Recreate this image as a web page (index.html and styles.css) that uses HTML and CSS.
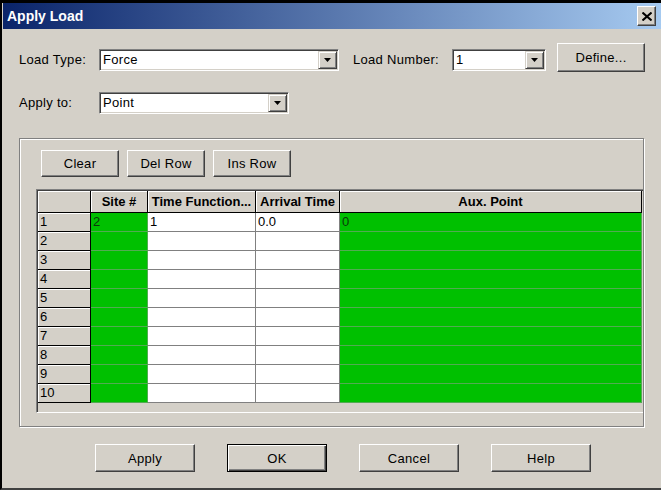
FILE: index.html
```html
<!DOCTYPE html>
<html lang="en">
<head>
  <meta charset="UTF-8" />
  <title>Apply Load</title>
  <link rel="stylesheet" href="styles.css">
</head>
<body>
  <div class="window">
    <div class="titlebar">
      <span class="title">Apply Load</span>
      <button class="close">
        <svg width="10" height="9" viewBox="0 0 10 9"><path d="M0.5 0.5 L9.5 8.5 M9.5 0.5 L0.5 8.5" stroke="#000" stroke-width="2" fill="none"/></svg>
      </button>
    </div>

    <div class="content">
      <div class="row">
        <span class="lbl lbl-type">Load Type:</span>
        <div class="combo combo-type">
          <span class="combo-text">Force</span>
          <span class="drop"><svg width="7" height="4" viewBox="0 0 7 4"><polygon points="0,0 7,0 3.5,4" fill="#000"/></svg></span>
        </div>
        <span class="lbl lbl-num">Load Number:</span>
        <div class="combo combo-num">
          <span class="combo-text">1</span>
          <span class="drop"><svg width="7" height="4" viewBox="0 0 7 4"><polygon points="0,0 7,0 3.5,4" fill="#000"/></svg></span>
        </div>
        <button class="btn btn-define">Define...</button>
      </div>

      <div class="row row-apply">
        <span class="lbl lbl-type">Apply to:</span>
        <div class="combo combo-point">
          <span class="combo-text">Point</span>
          <span class="drop"><svg width="7" height="4" viewBox="0 0 7 4"><polygon points="0,0 7,0 3.5,4" fill="#000"/></svg></span>
        </div>
      </div>

      <div class="group">
        <div class="tools">
          <button class="btn btn-tool">Clear</button>
          <button class="btn btn-tool">Del Row</button>
          <button class="btn btn-tool">Ins Row</button>
        </div>

        <div class="grid-wrap">
          <div class="grid">
            <div class="hd"></div>
            <div class="hd">Site #</div>
            <div class="hd">Time Function...</div>
            <div class="hd">Arrival Time</div>
            <div class="hd">Aux. Point</div>

            <div class="rh">1</div><div class="cell green">2</div><div class="cell">1</div><div class="cell">0.0</div><div class="cell green">0</div>
            <div class="rh">2</div><div class="cell green"></div><div class="cell"></div><div class="cell"></div><div class="cell green"></div>
            <div class="rh">3</div><div class="cell green"></div><div class="cell"></div><div class="cell"></div><div class="cell green"></div>
            <div class="rh">4</div><div class="cell green"></div><div class="cell"></div><div class="cell"></div><div class="cell green"></div>
            <div class="rh">5</div><div class="cell green"></div><div class="cell"></div><div class="cell"></div><div class="cell green"></div>
            <div class="rh">6</div><div class="cell green"></div><div class="cell"></div><div class="cell"></div><div class="cell green"></div>
            <div class="rh">7</div><div class="cell green"></div><div class="cell"></div><div class="cell"></div><div class="cell green"></div>
            <div class="rh">8</div><div class="cell green"></div><div class="cell"></div><div class="cell"></div><div class="cell green"></div>
            <div class="rh">9</div><div class="cell green"></div><div class="cell"></div><div class="cell"></div><div class="cell green"></div>
            <div class="rh">10</div><div class="cell green"></div><div class="cell"></div><div class="cell"></div><div class="cell green"></div>
          </div>
        </div>
      </div>

      <div class="actions">
        <button class="btn btn-main">Apply</button>
        <button class="btn btn-main btn-default">OK</button>
        <button class="btn btn-main">Cancel</button>
        <button class="btn btn-main">Help</button>
      </div>
    </div>
  </div>
</body>
</html>
```

FILE: styles.css
```css
* { box-sizing: border-box; }
body {
  margin: 0;
  background: #d4d0c8;
  font-family: "Liberation Sans", Arial, sans-serif;
  font-size: 13px;
  color: #000;
}
.window {
  width: 661px;
  height: 490px;
  border-top: 3px solid #000;
  border-left: 2px solid #000;
  border-bottom: 2px solid #404040;
  background: #d4d0c8;
  display: flex;
  flex-direction: column;
}
.titlebar {
  height: 26px;
  margin-left: 1px;
  padding: 0 5px 0 4px;
  background: linear-gradient(to right, #0a246a, #a6caf0);
  display: flex;
  align-items: center;
  justify-content: space-between;
}
.title {
  color: #fff;
  font-weight: bold;
  font-size: 14px;
}
.close {
  width: 19px;
  height: 20px;
  padding: 0;
  background: #d4d0c8;
  border: 1px solid;
  border-color: #fff #404040 #404040 #fff;
  box-shadow: inset -1px -1px #808080;
  display: flex;
  align-items: center;
  justify-content: center;
}
.content {
  flex: 1;
  padding: 14px 0 0 17px;
}
.row {
  display: flex;
  align-items: flex-start;
}
.row-apply { margin-top: 20px; }
.lbl {
  line-height: 22px;
  margin-top: 6px;
  letter-spacing: 0.3px;
}
.row-apply .lbl { margin-top: 0; }
.lbl-type { width: 80px; }
.lbl-num { width: 99px; margin-left: 14px; }
.combo {
  height: 22px;
  margin-top: 6px;
  padding: 1px;
  background: #fff;
  border: 1px solid;
  border-color: #808080 #fff #fff #808080;
  box-shadow: inset 1px 1px #404040, inset -1px -1px #d4d0c8;
  display: flex;
}
.row-apply .combo { margin-top: 0; }
.combo-type { width: 240px; }
.combo-num { width: 94px; }
.combo-point { width: 190px; }
.combo-text {
  flex: 1;
  padding-left: 2px;
  line-height: 18px;
  letter-spacing: 0.3px;
}
.drop {
  width: 19px;
  height: 18px;
  background: #d4d0c8;
  border: 1px solid;
  border-color: #d4d0c8 #404040 #404040 #d4d0c8;
  box-shadow: inset 1px 1px #fff, inset -1px -1px #808080;
  display: flex;
  align-items: center;
  justify-content: center;
}
.btn {
  font: inherit;
  letter-spacing: 0.3px;
  color: #000;
  padding: 0;
  background: #d4d0c8;
  border: 1px solid;
  border-color: #fff #404040 #404040 #fff;
  box-shadow: inset -1px -1px #808080;
}
.btn-define {
  width: 88px;
  height: 29px;
  margin-left: 11px;
}
.group {
  margin-top: 24px;
  width: 625px;
  height: 289px;
  padding: 11px 0 0 16px;
  border: 1px solid #808080;
  box-shadow: inset 1px 1px #fff, 1px 1px #fff;
}
.tools {
  display: flex;
  gap: 8px;
  margin-left: 5px;
}
.btn-tool {
  width: 78px;
  height: 27px;
}
.grid-wrap {
  margin-top: 12px;
  width: 607px;
  height: 224px;
  padding: 1px 0 0 1px;
  border-top: 1px solid #808080;
  border-left: 1px solid #808080;
  border-bottom: 1px solid #fff;
  box-shadow: inset 1px 1px #404040;
}
.grid {
  display: grid;
  grid-template-columns: 53px 57px 108px 84px 302px;
  grid-template-rows: 22px;
  grid-auto-rows: 19px;
}
.hd, .rh {
  background: #d4d0c8;
  border-right: 1px solid #000;
  border-bottom: 1px solid #000;
  box-shadow: inset 1px 1px #fff;
}
.hd {
  font-weight: bold;
  text-align: center;
  line-height: 21px;
}
.rh {
  padding-left: 2px;
  line-height: 18px;
}
.cell {
  background: #fff;
  border-right: 1px solid #808080;
  border-bottom: 1px solid #808080;
  padding-left: 2px;
  line-height: 18px;
}
.cell.green {
  background: #00c000;
  border-color: #52ab52;
  color: #0a3a0a;
}
.actions {
  display: flex;
  gap: 32px;
  margin-top: 17px;
  padding-left: 76px;
}
.btn-main {
  width: 100px;
  height: 28px;
}
.btn-default {
  border-color: #000;
  box-shadow: inset 1px 1px #fff, inset -1px -1px #404040, inset -2px -2px #808080;
}
```
